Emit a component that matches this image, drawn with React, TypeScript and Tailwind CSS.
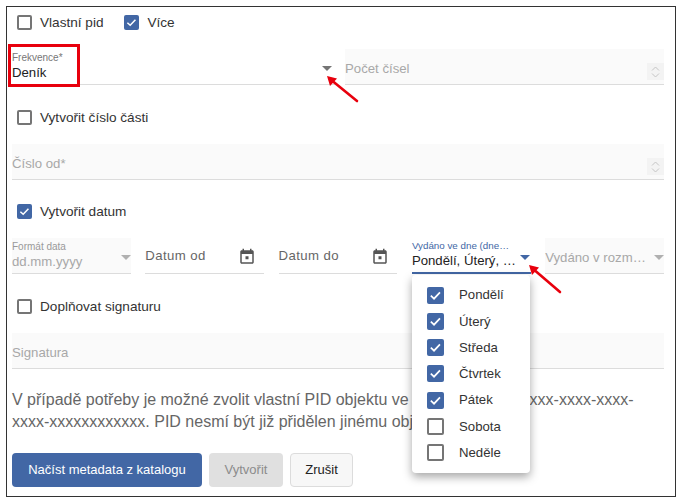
const Check = ({ checked, large }: { checked?: boolean; large?: boolean }) => {
  const size = large ? "h-[17px] w-[17px]" : "h-[15px] w-[15px]";
  return checked ? (
    <span className={`flex shrink-0 items-center justify-center rounded-[2px] bg-[#4267a5] ${size}`}>
      <svg viewBox="0 0 16 16" className={size} fill="none">
        <path d="M3.6 8.2 6.6 11 12.2 5" stroke="#fff" strokeWidth="1.6" />
      </svg>
    </span>
  ) : (
    <span className={`shrink-0 rounded-[2px] border-2 border-[#757575] bg-white ${size}`} />
  );
};

const CheckRow = ({ label, checked }: { label: string; checked?: boolean }) => (
  <label className="flex items-center gap-[8px] text-[13.6px] text-[#333]">
    <Check checked={checked} />
    {label}
  </label>
);

const Caret = ({ color = "#8a8a8a" }: { color?: string }) => (
  <svg viewBox="0 0 10 5" className="mt-[4px] h-[5px] w-[10px] shrink-0">
    <path d="M0 0h10L5 5z" fill={color} />
  </svg>
);

const Spinner = () => (
  <span className="flex h-[17px] w-[17px] flex-col items-center justify-center gap-[2px] bg-[#f3f3f3]">
    <svg viewBox="0 0 9 5" className="h-[5px] w-[9px]" fill="none">
      <path d="M1 4.5 4.5 1 8 4.5" stroke="#c4c4c4" />
    </svg>
    <svg viewBox="0 0 9 5" className="h-[5px] w-[9px]" fill="none">
      <path d="M1 .5 4.5 4 8 .5" stroke="#c4c4c4" />
    </svg>
  </span>
);

const Disabled = ({ label, spinner }: { label: string; spinner?: boolean }) => (
  <div className="flex h-[36px] items-center justify-between border-b border-[#dcdcdc] bg-[#fafafa] pt-[4px] text-[13.2px] text-[#a8a8a8]">
    <span>{label}</span>
    {spinner && (
      <span className="mt-[6px]">
        <Spinner />
      </span>
    )}
  </div>
);

const DateField = ({ label }: { label: string }) => (
  <div className="flex h-[36px] items-center justify-between border-b border-[#dcdcdc] pr-[8px] text-[13.2px] text-[#666]">
    <span className="tracking-[0.4px]">{label}</span>
    <svg viewBox="0 0 24 24" className="mt-[3px] h-[18px] w-[18px]" fill="#555">
      <path d="M19 3h-1V1h-2v2H8V1H6v2H5c-1.11 0-1.99.9-1.99 2L3 19c0 1.1.89 2 2 2h14c1.1 0 2-.9 2-2V5c0-1.1-.9-2-2-2zm0 16H5V8h14v11zM10 11h4v4h-4z" />
    </svg>
  </div>
);

const days: [string, boolean][] = [
  ["Pondělí", true],
  ["Úterý", true],
  ["Středa", true],
  ["Čtvrtek", true],
  ["Pátek", true],
  ["Sobota", false],
  ["Neděle", false],
];

const Arrow = ({ className, d }: { className: string; d: string }) => (
  <svg viewBox="0 0 40 40" className={`absolute h-[40px] w-[40px] ${className}`} fill="none">
    <path d={d} stroke="#e8000d" strokeWidth="2.6" strokeLinecap="round" />
    <path d="M5 5 15 7.5 8 15z" fill="#e8000d" />
  </svg>
);

const App = () => {
  return (
    <div className="relative h-[501px] w-[682px] overflow-hidden bg-white pt-[6px] pl-[6px] font-['Liberation_Sans',sans-serif]">
      <div className="relative h-[491px] w-[670px] border border-[#333] pr-[11px] pl-[5px]">
        <div className="flex h-[30px] items-center gap-[21px] pt-[2px] pl-[5px]">
          <CheckRow label="Vlastní pid" />
          <CheckRow label="Více" checked />
        </div>

        <div className="mt-[12px] grid grid-cols-[324px_319px] gap-[9px]">
          <div className="flex h-[36px] items-center justify-between border-b border-[#dcdcdc] pr-[4px]">
            <div className="flex flex-col">
              <span className="mb-[1px] text-[10px] leading-[11px] text-[#777]">Frekvence*</span>
              <span className="text-[13.2px] leading-[18px] text-[#222]">Deník</span>
            </div>
            <Caret color="#757575" />
          </div>
          <Disabled label="Počet čísel" spinner />
        </div>

        <div className="mt-[17px] flex h-[30px] items-center pt-[2px] pl-[5px]">
          <CheckRow label="Vytvořit číslo části" />
        </div>

        <div className="mt-[12px]">
          <Disabled label="Číslo od*" spinner />
        </div>

        <div className="mt-[16px] flex h-[30px] items-center pt-[2px] pl-[5px]">
          <CheckRow label="Vytvořit datum" checked />
        </div>

        <div className="mt-[12px] grid grid-cols-5 gap-[14.5px]">
          <div className="flex h-[36px] items-center justify-between border-b border-[#dcdcdc] bg-[#fafafa]">
            <div className="flex flex-col">
              <span className="mb-[1px] text-[10px] leading-[11px] text-[#999]">Formát data</span>
              <span className="text-[13.2px] leading-[18px] text-[#a8a8a8]">dd.mm.yyyy</span>
            </div>
            <Caret color="#b0b0b0" />
          </div>
          <DateField label="Datum od" />
          <DateField label="Datum do" />
          <div className="flex h-[36px] items-center justify-between border-b-2 border-[#4267a5] pr-[1px]">
            <div className="flex min-w-0 flex-col">
              <span className="mb-[1px] text-[9.8px] leading-[11px] whitespace-nowrap text-[#4267a5]">Vydáno ve dne (dne…</span>
              <span className="text-[13.2px] leading-[18px] whitespace-nowrap text-[#222]">Pondělí, Úterý, …</span>
            </div>
            <Caret color="#4267a5" />
          </div>
          <div className="flex h-[36px] items-center justify-between border-b border-[#dcdcdc] bg-[#fafafa] text-[13.2px] text-[#a8a8a8]">
            <span className="pt-[4px] whitespace-nowrap">Vydáno v rozm…</span>
            <Caret color="#b0b0b0" />
          </div>
        </div>

        <div className="mt-[17px] flex h-[30px] items-center pt-[2px] pl-[5px]">
          <CheckRow label="Doplňovat signaturu" />
        </div>

        <div className="mt-[12px]">
          <Disabled label="Signatura" />
        </div>

        <p className="mt-[20px] w-[640px] text-[16px] leading-[22px] text-[#666]">
          V případě potřeby je možné zvolit vlastní PID objektu ve uuid: xxxxxxxx-xxxx-xxxx-xxxx-xxxx-xxxxxxxxxxxx. PID nesmí být již přidělen jinému objektu.
        </p>

        <div className="mt-[20px] flex gap-[7px] text-[13px]">
          <button className="h-[34px] w-[190px] rounded-[4px] bg-[#4267a5] text-white">Načíst metadata z katalogu</button>
          <button className="h-[34px] w-[74px] rounded-[4px] bg-[#e0e0e0] text-[#8c8c8c]">Vytvořit</button>
          <button className="h-[34px] w-[63px] rounded-[4px] border border-[#dcdcdc] bg-[#f7f7f7] text-[#222]">Zrušit</button>
        </div>

        <div className="absolute top-[268px] left-[405px] flex h-[198px] w-[118px] flex-col rounded-[4px] bg-white py-[7px] shadow-[0_4px_10px_rgba(0,0,0,0.35)]">
          {days.map(([day, checked]) => (
            <div key={day} className="flex h-[26.4px] items-center gap-[15px] pl-[15px] text-[13.2px] text-[#333]">
              <Check checked={checked} large />
              {day}
            </div>
          ))}
        </div>
      </div>

      <div className="absolute top-[44px] left-[8px] h-[43px] w-[72px] border-[3px] border-[#e8000d]" />
      <Arrow className="top-[71px] left-[322px]" d="M35 30 L8 8" />
      <Arrow className="top-[260px] left-[524px]" d="M36 32 L8 8" />
    </div>
  );
};

export default App;
